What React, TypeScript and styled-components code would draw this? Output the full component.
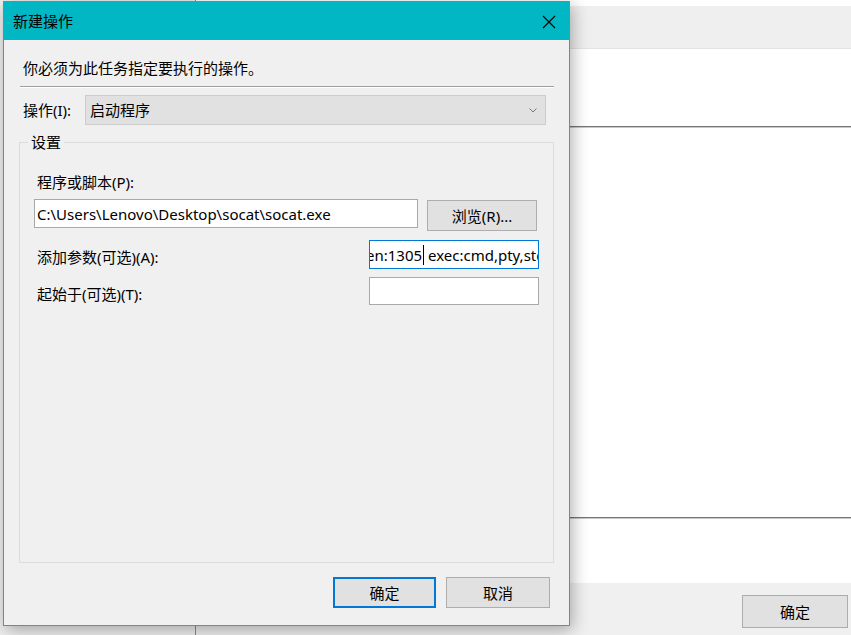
import React from "react";
import styled, { createGlobalStyle } from "styled-components";

const GlobalStyle = createGlobalStyle`
  html, body {
    margin: 0;
    padding: 0;
    overflow: hidden;
  }
  body {
    font-family: "Segoe UI", "Noto Sans", "Noto Sans CJK SC", sans-serif;
    font-size: 15px;
    color: #000;
  }
  * {
    box-sizing: border-box;
  }
`;

const Desktop = styled.div`
  position: relative;
  width: 851px;
  height: 635px;
  overflow: hidden;
  background: #fff;
`;

/* the task scheduler window behind the dialog */
const BackWindow = styled.div`
  display: grid;
  grid-template-columns: 196px 1fr;
  height: 100%;
`;

const SidePane = styled.div`
  background: #f0f0f0;
  border-right: 1px solid #8c8c8c;
`;

const MainPane = styled.div`
  display: flex;
  flex-direction: column;
  height: 100%;
`;

const TopStrip = styled.div`
  height: 6px;
  background: #fff;
`;

const Ribbon = styled.div`
  height: 43px;
  background: #efefef;
  border-bottom: 1px solid #e3e3e3;
`;

const Sheet = styled.div<{ $h: number }>`
  height: ${(p) => p.$h}px;
  background: #fff;
`;

const Rule = styled.div`
  height: 2px;
  border-top: 1px solid #767676;
  border-bottom: 1px solid #c8c8c8;
`;

const Footer = styled.div`
  flex: 1;
  background: #f0f0f0;
  display: flex;
  justify-content: flex-end;
  align-items: flex-start;
  padding: 12px 3px 0 0;
`;

const WinButton = styled.button<{ $primary?: boolean; $w: number; $h: number }>`
  width: ${(p) => p.$w}px;
  height: ${(p) => p.$h}px;
  background: #e1e1e1;
  border: ${(p) => (p.$primary ? "2px solid #0078d7" : "1px solid #adadad")};
  font-family: inherit;
  font-size: 15px;
  line-height: 20px;
  color: #000;
  padding: 0;
  margin: 0;
  flex: none;
`;

/* the dialog floats above the window */
const Dialog = styled.div`
  position: absolute;
  left: 3px;
  top: 1px;
  width: 567px;
  height: 625px;
  background: #f0f0f0;
  border: 1px solid #19aebb;
  box-shadow: 2px 4px 16px rgba(0, 0, 0, 0.32);
  display: flex;
  flex-direction: column;
`;

const TitleBar = styled.div`
  height: 38px;
  background: #00b7c3;
  display: flex;
  align-items: center;
  justify-content: space-between;
  padding-left: 9px;
  line-height: 20px;
  flex: none;
`;

const CloseBox = styled.div`
  width: 40px;
  height: 38px;
  display: flex;
  align-items: center;
  justify-content: center;
  padding-top: 2px;
`;

const Body = styled.div`
  flex: 1;
  display: flex;
  flex-direction: column;
  padding: 18px 15px 0 15px;
`;

const Prompt = styled.div`
  line-height: 20px;
  padding-left: 4px;
`;

const Separator = styled.div`
  margin: 8px 0 0 1px;
  height: 2px;
  border-top: 1px solid #a0a0a0;
  border-bottom: 1px solid #fff;
`;

const ActionRow = styled.div`
  display: flex;
  align-items: center;
  margin-top: 7px;
  padding-left: 4px;
`;

const Label = styled.label<{ $w?: number }>`
  line-height: 20px;
  white-space: nowrap;
  width: ${(p) => (p.$w ? `${p.$w}px` : "auto")};
  flex: none;
`;

const Combo = styled.div`
  width: 461px;
  height: 30px;
  background: #e1e1e1;
  border: 1px solid #cccccc;
  display: flex;
  align-items: center;
  justify-content: space-between;
  padding: 0 8px 0 4px;
  line-height: 20px;
`;

const Group = styled.div`
  position: relative;
  margin-top: 17px;
  height: 421px;
  border: 1px solid #dcdcdc;
  padding: 29px 14px 0 14px;
  display: flex;
  flex-direction: column;
`;

const GroupTitle = styled.span`
  position: absolute;
  top: -11px;
  left: 8px;
  padding: 0 3px;
  background: #f0f0f0;
  line-height: 20px;
`;

const FieldLabel = styled.div<{ $shift?: number }>`
  line-height: 20px;
  padding-left: 3px;
  padding-top: ${(p) => p.$shift ?? 0}px;
`;

const PathRow = styled.div`
  display: flex;
  align-items: flex-start;
  gap: 9px;
  margin-top: 7px;
`;

const TextBox = styled.div<{ $w: number; $h: number; $focus?: boolean }>`
  width: ${(p) => p.$w}px;
  height: ${(p) => p.$h}px;
  background: #fff;
  border: 1px solid ${(p) => (p.$focus ? "#0078d7" : "#a9a9a9")};
  padding: 0 2px;
  display: flex;
  align-items: center;
  overflow: hidden;
  white-space: nowrap;
  line-height: 20px;
  flex: none;
`;

const BrowseButton = styled(WinButton)`
  margin-top: 1px;
`;

const OptionRow = styled.div<{ $gap: number }>`
  display: flex;
  align-items: center;
  justify-content: space-between;
  margin-top: ${(p) => p.$gap}px;
`;

/* the argument box is scrolled so only the middle of its value shows */
const Scrolled = styled.span`
  margin-left: -6px;
  display: inline-flex;
  align-items: center;
`;

const Caret = styled.span`
  display: inline-block;
  width: 1px;
  height: 20px;
  background: #000;
  margin-left: 1px;
`;

const ButtonBar = styled.div`
  display: flex;
  justify-content: flex-end;
  gap: 10px;
  margin-top: 14px;
  padding-right: 4px;
`;

const CloseIcon = () => (
  <svg width="14" height="14" viewBox="0 0 14 14">
    <path d="M1 1 L13 13 M13 1 L1 13" stroke="#000" strokeWidth="1.1" />
  </svg>
);

const Chevron = () => (
  <svg width="8" height="5" viewBox="0 0 8 5">
    <path d="M0.5 0.5 L4 4 L7.5 0.5" stroke="#777" strokeWidth="1" fill="none" />
  </svg>
);

const App = () => {
  return (
    <Desktop>
      <GlobalStyle />
      <BackWindow>
        <SidePane />
        <MainPane>
          <TopStrip />
          <Ribbon />
          <Sheet $h={77} />
          <Rule />
          <Sheet $h={389} />
          <Rule />
          <Sheet $h={64} />
          <Footer>
            <WinButton $w={106} $h={33}>
              确定
            </WinButton>
          </Footer>
        </MainPane>
      </BackWindow>

      <Dialog>
        <TitleBar>
          <span>新建操作</span>
          <CloseBox>
            <CloseIcon />
          </CloseBox>
        </TitleBar>
        <Body>
          <Prompt>你必须为此任务指定要执行的操作。</Prompt>
          <Separator />
          <ActionRow>
            <Label $w={62}>操作(I):</Label>
            <Combo>
              <span>启动程序</span>
              <Chevron />
            </Combo>
          </ActionRow>
          <Group>
            <GroupTitle>设置</GroupTitle>
            <FieldLabel>程序或脚本(P):</FieldLabel>
            <PathRow>
              <TextBox $w={384} $h={29}>
                C:\Users\Lenovo\Desktop\socat\socat.exe
              </TextBox>
              <BrowseButton $w={110} $h={31}>
                浏览(R)...
              </BrowseButton>
            </PathRow>
            <OptionRow $gap={9}>
              <FieldLabel $shift={4}>添加参数(可选)(A):</FieldLabel>
              <TextBox $w={170} $h={29} $focus>
                <Scrolled>
                  en:1305
                  <Caret />
                  &nbsp;exec:cmd,pty,stderr
                </Scrolled>
              </TextBox>
            </OptionRow>
            <OptionRow $gap={8}>
              <FieldLabel $shift={6}>起始于(可选)(T):</FieldLabel>
              <TextBox $w={170} $h={28} />
            </OptionRow>
          </Group>
          <ButtonBar>
            <WinButton $primary $w={103} $h={31}>
              确定
            </WinButton>
            <WinButton $w={104} $h={31}>
              取消
            </WinButton>
          </ButtonBar>
        </Body>
      </Dialog>
    </Desktop>
  );
};

export default App;
